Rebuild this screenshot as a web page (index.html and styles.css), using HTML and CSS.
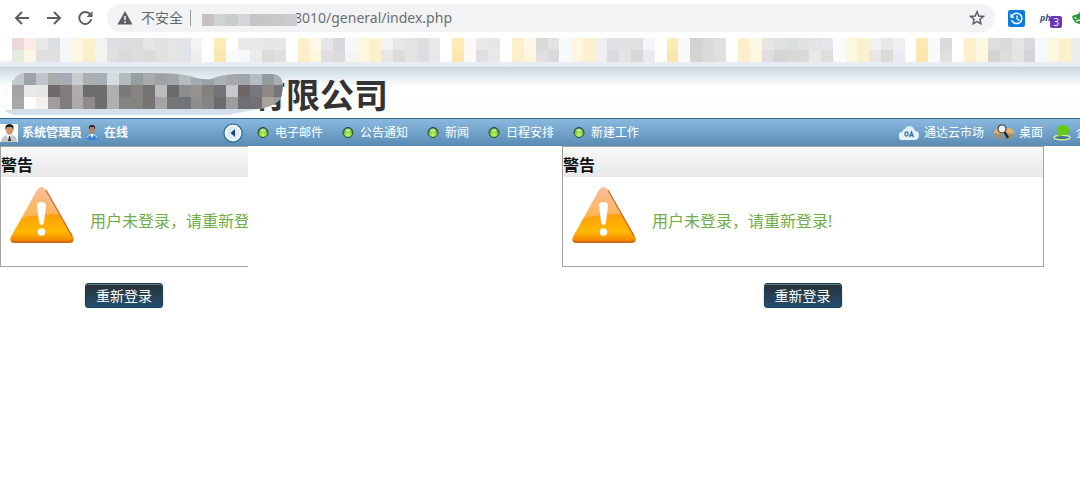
FILE: index.html
```html
<!DOCTYPE html>
<html lang="zh-CN">
<head>
<meta charset="utf-8">
<title>系统</title>
<link rel="stylesheet" href="styles.css">
</head>
<body>
<div class="browser">
  <div class="toolbar">
    <button class="tool" aria-label="后退"><svg width="16" height="16" viewBox="0 0 16 16"><path d="M15 8H2M8 2L2 8l6 6" fill="none" stroke="#5c5f62" stroke-width="2"/></svg></button>
    <button class="tool" aria-label="前进"><svg width="16" height="16" viewBox="0 0 16 16"><path d="M1 8h13M8 2l6 6-6 6" fill="none" stroke="#5c5f62" stroke-width="2"/></svg></button>
    <button class="tool" aria-label="刷新"><svg width="16" height="16" viewBox="0 0 16 16"><path d="M12.200 4.400A6 6 0 1 0 13.200 9.200" fill="none" stroke="#5c5f62" stroke-width="2"/><path d="M14.500 1v6h-6z" fill="#5c5f62"/></svg></button>
    <div class="address">
      <svg width="16" height="14" viewBox="0 0 16 14"><path d="M8 0l7.500 13.500H.5z" fill="#5c5f62"/><path d="M8 5v4M8 10.300v1.700" stroke="#f1f3f4" stroke-width="1.600"/></svg>
      <label class="secure" for="url">不安全</label>
      <span class="bar"></span>
      <svg class="host" width="98" height="28" viewBox="0 0 98 28" data-mosaic="host"></svg>
      <input id="url" type="text" value="8010/general/index.php">
      <button class="tool star" aria-label="收藏"><svg width="16" height="16" viewBox="0 0 16 16"><path d="M8 1.800l1.800 4.200 4.500.4-3.400 3 1 4.400L8 11.500l-3.900 2.300 1-4.400-3.400-3 4.500-.4z" fill="none" stroke="#5c5f62" stroke-width="1.500"/></svg></button>
    </div>
    <div class="extensions">
      <svg width="17" height="17" viewBox="0 0 17 17"><rect width="17" height="17" rx="2" fill="#0b7ddc"/><path d="M4.300 5.500A5.200 5.200 0 1 1 3.700 10" fill="none" stroke="#fff" stroke-width="1.500"/><path d="M2.500 3.500v4.200h4.200z" fill="#fff"/><path d="M9 5.500v3.500l2.500 1.500" fill="none" stroke="#fff" stroke-width="1.300"/></svg>
      <span class="php">php<span class="count">3</span></span>
      <svg width="8" height="14" viewBox="0 0 8 14"><path d="M0 5q3-1 8-3v11Q1 12 0 5z" fill="#239b35"/><path d="M6 2l2-2v2z" fill="#e6ad2f"/><path d="M2 6.500l3 1M4 10l4-1" stroke="#d9f4da" stroke-width="1.300"/></svg>
    </div>
  </div>
  <svg class="bookmarks" height="24" data-mosaic="bookmarks"></svg>
</div>
<header class="banner">
  <h1>有限公司</h1>
  <svg class="cover" width="288" height="48" viewBox="0 0 288 48"><defs><clipPath id="blob"><path d="M2 37Q4 43 14 46H228Q248 42 264 39Q282 34 282 24Q286 6 272 5H235Q220 6 211 10Q202 11 190 7Q178 4 150 4H23Q17 5 14 11L2 16z"/></clipPath></defs><g clip-path="url(#blob)"><rect width="288" height="48" fill="#d3dfea"/><rect y="12" width="12" height="29" fill="#fcfcfd"/><g data-mosaic="company"></g></g></svg>
</header>
<nav class="nav">
  <div class="user">
    <svg width="18" height="18" viewBox="0 0 18 18"><rect width="18" height="18" fill="#fff"/><path d="M1 18q0-6 6-7h5q5 1 5 7z" fill="#c5c8c8"/><path d="M6 10l3 7 3-7z" fill="#fff"/><path d="M9 12l-1 5h3l-1-5z" fill="#333"/><ellipse cx="9.500" cy="6" rx="3.500" ry="4.800" fill="#ca966c"/><path d="M5.500 6Q4.500 0 9.500 0t4 6L12 3H7z" fill="#241a16"/></svg>
    <strong>系统管理员</strong>
    <svg width="14" height="16" viewBox="0 0 14 16"><path d="M1 14q0-4 4-5h4q4 1 4 5-6 3-12 0z" fill="#3f7fd8"/><path d="M2 13q1-3 3-3M9 10q2 0 3 3" stroke="#9cc8f8" stroke-width="1.500" fill="none"/><path d="M5 9l2 4 2-4z" fill="#fff"/><ellipse cx="7" cy="5" rx="2.500" ry="3.800" fill="#b87e59"/><path d="M4 5Q3 0 7 0t3 5L9 2H5z" fill="#251f20"/></svg>
    <strong class="state">在线</strong>
    <button class="collapse" aria-label="收起"><svg width="20" height="20" viewBox="0 0 20 20"><circle cx="10" cy="10" r="9" fill="#dceaf5" stroke="#3a729f" stroke-width="1.500"/><circle cx="10" cy="10" r="7.500" fill="none" stroke="#fff" stroke-width="1.500"/><path d="M12 6v8L7.500 10z" fill="#18476c"/></svg></button>
  </div>
  <svg class="defs" width="0" height="0"><defs><radialGradient id="green" cx=".5" cy=".75" r=".7"><stop offset="0" stop-color="#c3ff6d"/><stop offset=".55" stop-color="#7fd038"/><stop offset="1" stop-color="#2c6518"/></radialGradient><symbol id="dot" viewBox="0 0 12 12"><circle cx="6" cy="5.500" r="5" fill="url(#green)" stroke="#2d4a38"/><ellipse cx="6" cy="3.200" rx="2.800" ry="1.600" fill="#e4f8da" opacity=".7"/></symbol><linearGradient id="amber" x1="0" y1="0" x2="0" y2="1"><stop offset="0" stop-color="#f7be9b"/><stop offset=".55" stop-color="#ffb452"/><stop offset="1" stop-color="#f47b00"/></linearGradient><linearGradient id="glow" x1="0" y1="0" x2="0" y2="1"><stop offset="0" stop-color="#ff9d0c"/><stop offset=".6" stop-color="#ffb900"/><stop offset="1" stop-color="#f07a00"/></linearGradient><symbol id="warning" viewBox="0 0 64 58"><path d="M27 4Q31.500-2 36 4l27 47q2 6-4 6H5q-6 0-4-6z" fill="url(#amber)"/><path d="M12 32Q30 28 49 28L63 51q2 6-4 6H5q-6 0-4-6z" fill="url(#glow)"/><path d="M2 54q1 2 4 2h52q3 0 4-2M36 4l26 46" fill="none" stroke="#b66026" stroke-width="1.500" opacity=".8"/><path d="M27 20q0-4 4.500-4t4.500 4l-2 16q-.5 3-2.500 3t-2.500-3z" fill="#fff"/><circle cx="31.500" cy="46" r="3.800" fill="#fff"/></symbol></defs></svg>
  <div class="shortcuts">
    <a href="#mail"><svg width="12" height="12"><use href="#dot"/></svg>电子邮件</a>
    <a href="#notice"><svg width="12" height="12"><use href="#dot"/></svg>公告通知</a>
    <a href="#news"><svg width="12" height="12"><use href="#dot"/></svg>新闻</a>
    <a href="#calendar"><svg width="12" height="12"><use href="#dot"/></svg>日程安排</a>
    <a href="#work"><svg width="12" height="12"><use href="#dot"/></svg>新建工作</a>
  </div>
  <div class="links">
    <a href="#market"><svg width="20" height="14" viewBox="0 0 20 14"><path d="M4 14a4 4 0 0 1-1-8Q4 3 6 3q1-3 5-3 4 1 5 5 4 0 4 4 0 5-5 5z" fill="#e2f1fb"/><rect x="6" y="6" width="3" height="4" rx="1.500" fill="none" stroke="#3977af" stroke-width="1.300"/><path d="M10.500 11l2-5 2 5m-3.500-1.500h3" fill="none" stroke="#3977af" stroke-width="1.300"/></svg>通达云市场</a>
    <a href="#desktop"><svg width="20" height="17" viewBox="0 0 20 17"><path d="M3 4h14l3 4v2H0V8z" fill="#dfb16c"/><path d="M2 9v5M6 9v7M14 9v7M18 9v5" stroke="#c08b47" stroke-width="2"/><path d="M10 7l4 7" stroke="#282725" stroke-width="2.500"/><circle cx="8" cy="4.800" r="4" fill="#eef2f3" stroke="#4a4d4d" stroke-width="1.300"/></svg>桌面</a>
    <a href="#enterprise"><svg width="18" height="16" viewBox="0 0 18 16"><ellipse cx="9" cy="12.500" rx="8" ry="2.300" fill="#45739a" stroke="#d6e995" stroke-width="1.500"/><path d="M4 5q0-5 6-5t6 5-6 5l-6 2 2-3Q4 8 4 5z" fill="#65cc0c"/></svg><span class="cut">企</span></a>
  </div>
</nav>
<div class="frames">
  <aside class="side">
    <section class="alert">
      <h2>警告</h2>
      <div class="message"><svg width="64" height="58"><use href="#warning"/></svg><p>用户未登录，请重新登录!</p></div>
    </section>
    <button class="login">重新登录</button>
  </aside>
  <main class="main">
    <section class="alert">
      <h2>警告</h2>
      <div class="message"><svg width="64" height="58"><use href="#warning"/></svg><p>用户未登录，请重新登录!</p></div>
    </section>
    <button class="login">重新登录</button>
  </main>
</div>
<script src="script.js"></script>
</body>
</html>
```
FILE: styles.css
```css
* { box-sizing: border-box; }
body {
  margin: 0;
  overflow: hidden;
  background: #fff;
  font-family: "Noto Sans", "Noto Sans CJK SC", sans-serif;
}
svg { display: block; flex: none; }
button { border: 0; padding: 0; background: none; font-family: inherit; }
h1, h2, p { margin: 0; }
.browser { height: 68px; padding-top: 4px; border-bottom: 1px solid #ccd0d3; background: linear-gradient(#fff 60px, #e7edf2 62px); }
.toolbar { display: flex; align-items: center; height: 28px; padding-left: 14px; }
.tool { width: 16px; height: 16px; margin-right: 16px; }
.address {
  display: flex;
  align-items: center;
  flex: 1;
  height: 28px;
  margin-left: -3px;
  padding-left: 10px;
  border-radius: 14px;
  background: #f1f3f4;
}
.secure { margin-left: 8px; color: #65686b; font-size: 14px; line-height: 20px; }
.bar { width: 1px; height: 16px; margin: 0 8px 0 7px; background: #9a9da0; }
.host { position: relative; }
#url {
  flex: 1;
  min-width: 0;
  height: 24px;
  margin-left: -3px;
  border: 0;
  padding: 0 0 2px;
  outline: 0;
  background: none;
  color: #6c6f72;
  font: 14px "Noto Sans", sans-serif;
}
.star { margin-right: 10px; }
.extensions { display: flex; align-items: center; gap: 15px; margin-left: 13px; }
.php { position: relative; width: 17px; color: #42508a; font: italic bold 9px/16px "Open Sans", sans-serif; }
.count { position: absolute; left: 10px; top: 6px; width: 12px; height: 12px; border-radius: 2px; background: #6938b7; color: #fff; font: 10px/12px "Open Sans", sans-serif; text-align: center; }
.bookmarks { width: 100%; margin-top: 6px; }
.banner {
  position: relative;
  height: 50px;
  padding-left: 252px;
  background: linear-gradient(#ccdae4, #fff 19px, #fdfdfd);
}
.banner h1 { color: #333; font-size: 34px; line-height: 54px; }
.cover { position: absolute; left: 0; top: 1px; }
.nav {
  display: flex;
  align-items: center;
  height: 28px;
  border-top: 1px solid #356a92;
  background: linear-gradient(#89b9df, #5a8bb3);
  color: #fff;
  font-size: 12px;
  line-height: 18px;
  white-space: nowrap;
}
.user { display: flex; align-items: center; width: 257px; }
.user strong { margin: 0 3px 0 4px; }
.user .state { margin-left: 5px; }
.collapse { margin: 0 14px 0 auto; }
.defs { position: absolute; }
.shortcuts { display: flex; gap: 19px; }
.nav a { display: flex; align-items: center; gap: 6px; color: #fff; text-decoration: none; }
.links { display: flex; gap: 10px; margin-left: auto; }
.nav .links a { gap: 5px; }
.cut { width: 4px; overflow: hidden; }
.frames { display: flex; }
.side { width: 248px; overflow: hidden; text-align: center; }
.main { flex: 1; padding: 0 37px 0 314px; text-align: center; }
.main .alert { margin-right: -1px; }
.alert { height: 121px; border: 1px solid #a3a3a3; text-align: left; }
.side .alert { width: 482px; }
.alert h2 { height: 30px; background: linear-gradient(#f9f9f9, #e8e8e8); color: #111; font-size: 16px; line-height: 36px; }
.message { display: flex; gap: 16px; padding: 9px; color: #70ad47; font-size: 16px; line-height: 24px; white-space: nowrap; }
.message p { padding-top: 23px; }
.login {
  width: 78px;
  height: 25px;
  margin-top: 16px;
  border: 1px solid #1c3e55;
  border-radius: 3px;
  background: linear-gradient(#292f33, #24506f);
  box-shadow: inset 0 1px #5f7c8d, 0 1px 2px #bbb;
  color: #fff;
  font-size: 14px;
  line-height: 22px;
}
```
FILE: script.js
```js
const CELL = 11.9;
const mosaics = {
  bookmarks: { x: 12, y: 0, h: 12, rows: [
    'ead9da fdeae4 e8e8e8 dcdfdf f6f6fb fdf7e0 fcf1cd f3f3f3 dedfe2 dcdde0 dcdcdd e6e8e5 e2e2e3 e4e5e5 e2e4e9 f2f3f3 ffffff fdeab5 fffefc e9e9ea e8e8e8 e6e6e5 e7e7e8 ffffff fdefcb fdf9e8 e5e4e6 d9d7da f7f8f8 fdf7e0 fcf1cd f3f2f4 e5e8e6 e3e4e4 dedfe1 e7e8ec ffffff fdeab5 fcfaf8 e9e9ea e7e7e8 ffffff fdefcb fcf8e7 dad9d9 e2e2e2 f8fbfd fdf6e0 fcf1cd efeff0 e0e0e4 e3e1e4 e2dfe1 f4f6f9 ffffff fdeab5 f9f9f9 d2d2d3 dad9d8 dedfe1 ffffff fdefcb fbf8e6 e8e6e4 dfe1e3 dcdfdf e3e1e3 e2e4e5 e5e6e9 f9fbfd fdf7e0 fcf1cd f2f1f2 e5e8e7 edeff2 ffffff fbe9b4 f9f9f9 d9dadd ffffff fdefcb fcf7e3 dfdddd d9d9d9 e5e5e3 d8d9da f5f8fc fdf7e0 fcf1cd ececed',
    'e4ecdd fff7e3 e0dee0 e0e0e0 f6f7fa fdf7e0 fcefc8 f3f3f3 e1dfe0 d9d9dc dcdddd dadcdb e2e1e1 e7e4e4 e0e3e9 edefef ffffff fbe6ae fbfafa f6f9fc ebebec dcdbda dfdfe1 ffffff fdeec8 fdf5de e0dee0 dddadd f3f4f4 fdf7e0 fcf1cd e8e7e6 dcdbdb e3e3e3 dcdde0 e6e8ec ffffff fbe6ae fcfaf8 dedfe3 e8e8e8 ffffff fdefcb fdf5de e0dedf dad8db f8fbfd fdf6e0 fcf1cd f2f1f1 dbdbdf e5e3e2 d9d6d9 e8eaed ffffff fbe6ae f9f9f9 d5d4d4 dcd9d8 dedfe1 ffffff fdefcb fdf5de dfdde0 d4d4d4 d8d8d8 dad8da e8eaea dfdddd f9fbfd fdf7e0 fcf1cd e8e6e6 dcdad9 e8ecf2 ffffff fbe6ae f9f9f9 dfdfe1 ffffff fdefcb fdf5de d6d3d2 dcdcdb e4e3e1 d3d4d5 f5f8fc fdf7e0 fcf1cd ececed'
  ] },
  company: { x: 12, y: 4, h: 12, rows: [
    'c2c8cb 9fa3a7 bec5ca a7abab a7adb7 c6ccd0 acb0b0 a9afb8 d5dde1 b4bbbf 989d9f a7abae 9fa2a4 a2a7aa b5bcbe a4aab0 9ca0a7 aab0b6 a5a7a8 a3a6a8 b6bdc2 969b9f a8aeb2',
    'a4a3a2 e8e8ea e6e6e8 6d6b69 7f7c7a b1abad 6c6d6b 6d6e6b aeb1b3 7b7a78 878481 747372 bbbbbc 696a6a 8d8d90 949291 83807e 747375 c7c8cc 6e6667 777780 8e8782 767678',
    'a8a8ab ffffff f6f1ee a09e9c 807d7c aaa9ae 8f8b8c 6f6e6f adb0b2 858481 858380 787472 a3a3a9 787674 70757b 8f8c8e 868485 6b6b6d 9c9d9f 706e70 707075 a7a29b 9a9b9d'
  ] },
  host: { x: 3, y: 10, h: 12, rows: ['c5c2c1 cfd3d4 c8cccd d4d6d8 c6c4c8 c7c6c7 c7c9ca c9cbce'] }
};

document.querySelectorAll('[data-mosaic]').forEach(target => {
  const { x, y, h, rows } = mosaics[target.dataset.mosaic];
  rows.forEach((row, r) => row.split(' ').forEach((color, c) => {
    const rect = document.createElementNS('http://www.w3.org/2000/svg', 'rect');
    const left = Math.round(x + c * CELL);
    const values = { x: left, y: y + r * h, width: Math.round(x + (c + 1) * CELL) - left, height: h, fill: '#' + color };
    Object.entries(values).forEach(([name, value]) => rect.setAttribute(name, value));
    target.append(rect);
  }));
});
```
